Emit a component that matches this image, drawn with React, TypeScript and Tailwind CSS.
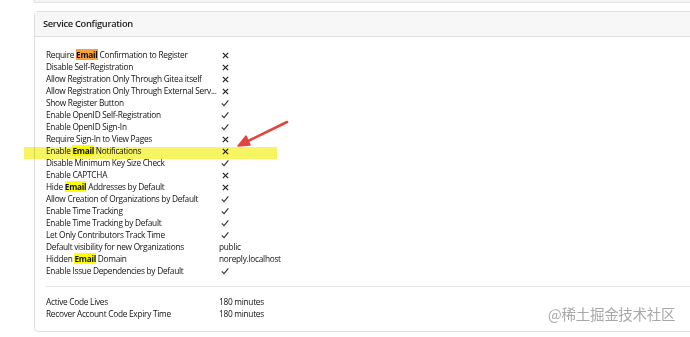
type Row = { label: React.ReactNode; value: "yes" | "no" | string };

function Hl({ orange }: { orange?: boolean }) {
  return (
    <span className={orange ? "bg-[#f7a13a] font-bold" : "bg-[#ffff00] font-bold"}>Email</span>
  );
}

function Check() {
  return (
    <svg className="w-[8px] h-[8px]" viewBox="0 0 10 10" fill="none" stroke="#333" strokeWidth={1.4}>
      <path d="M1 5.5 L3.8 8.2 L9.2 1.8" />
    </svg>
  );
}

function Cross() {
  return (
    <svg className="w-[7px] h-[7px]" viewBox="0 0 10 10" fill="none" stroke="#222" strokeWidth={1.7}>
      <path d="M1.2 1.2 L8.8 8.8 M8.8 1.2 L1.2 8.8" />
    </svg>
  );
}

const rows: Row[] = [
  { label: <>Require <Hl orange /> Confirmation to Register</>, value: "no" },
  { label: "Disable Self-Registration", value: "no" },
  { label: "Allow Registration Only Through Gitea itself", value: "no" },
  { label: "Allow Registration Only Through External Serv...", value: "no" },
  { label: "Show Register Button", value: "yes" },
  { label: "Enable OpenID Self-Registration", value: "yes" },
  { label: "Enable OpenID Sign-In", value: "yes" },
  { label: "Require Sign-In to View Pages", value: "no" },
  { label: <>Enable <Hl /> Notifications</>, value: "no" },
  { label: "Disable Minimum Key Size Check", value: "yes" },
  { label: "Enable CAPTCHA", value: "no" },
  { label: <>Hide <Hl /> Addresses by Default</>, value: "no" },
  { label: "Allow Creation of Organizations by Default", value: "yes" },
  { label: "Enable Time Tracking", value: "yes" },
  { label: "Enable Time Tracking by Default", value: "yes" },
  { label: "Let Only Contributors Track Time", value: "yes" },
  { label: "Default visibility for new Organizations", value: "public" },
  { label: <>Hidden <Hl /> Domain</>, value: "noreply.localhost" },
  { label: "Enable Issue Dependencies by Default", value: "yes" },
];

function ConfigRow({ row }: { row: Row }) {
  return (
    <div className="flex items-center h-[12px]">
      <div className="w-[173px] whitespace-nowrap">{row.label}</div>
      <div className="flex items-center">
        {row.value === "yes" ? (
          <span className="pl-[2px]"><Check /></span>
        ) : row.value === "no" ? (
          <span className="pl-[3px]"><Cross /></span>
        ) : (
          <span>{row.value}</span>
        )}
      </div>
    </div>
  );
}

export default function App() {
  return (
    <div
      className="relative w-[690px] h-[337px] overflow-hidden bg-white text-[8.3px] tracking-[-0.27px] text-[#111]"
      style={{ fontFamily: '"Open Sans", "Noto Sans", sans-serif' }}
    >
      <div className="ml-[34px] w-[680px] h-[3px] bg-[#f4f4f4] border-l border-b border-[#e3e3e3]" />

      <div className="ml-[34px] mt-[8px] w-[680px] border border-[#dedede] rounded-sm">
        <div className="h-[25px] bg-[#f7f7f7] border-b border-[#dedede] flex items-center pl-[8px]">
          <span className="text-[9.3px] tracking-[-0.3px] font-semibold text-[#1a1a1a]">Service Configuration</span>
        </div>
        <div className="pl-[11px] pt-[12px] pb-[11px]">
          {rows.map((r, i) => (
            <ConfigRow key={i} row={r} />
          ))}
          <div className="border-t border-[#e6e6e6] mt-[9px] mb-[9px]" />
          <div className="flex items-center h-[12px]">
            <div className="w-[173px]">Active Code Lives</div>
            <div>180 minutes</div>
          </div>
          <div className="flex items-center h-[12px]">
            <div className="w-[173px]">Recover Account Code Expiry Time</div>
            <div>180 minutes</div>
          </div>
        </div>
      </div>

      {/* yellow marker highlight */}
      <div className="absolute left-[24px] top-[147px] w-[253px] h-[12px] bg-[#f5f23a] opacity-80 mix-blend-multiply" />

      {/* red annotation arrow */}
      <svg className="absolute left-[230px] top-[114px]" width="66" height="40" viewBox="0 0 66 40">
        <path d="M57 8 L14 29" stroke="#e5433d" strokeWidth={2.6} strokeLinecap="round" />
        <path d="M8 32 L16 22 L20 31 Z" fill="#e5433d" stroke="#e5433d" strokeWidth={1.5} strokeLinejoin="round" />
      </svg>

      <div
        className="absolute left-[548px] top-[303px] text-[14.5px] text-[#a8a8a8]"
        style={{ fontFamily: '"Noto Sans CJK SC", sans-serif' }}
      >
        @稀土掘金技术社区
      </div>
    </div>
  );
}
